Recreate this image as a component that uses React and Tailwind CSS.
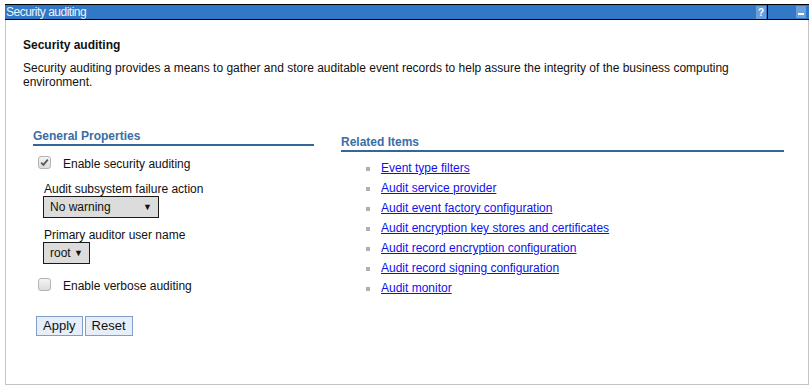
import React from "react";

function Check({ checked }) {
  return (
    <div className="w-[13px] h-[13px] rounded-[3px] border border-[#b4b4b4] bg-gradient-to-b from-[#f4f4f4] to-[#dcdcdc] flex items-center justify-center shrink-0">
      {checked && (
        <svg width="9" height="9" viewBox="0 0 9 9">
          <path d="M1.2 4.6 L3.4 6.8 L7.8 1.6" stroke="#5a5a5a" strokeWidth="1.8" fill="none" />
        </svg>
      )}
    </div>
  );
}

function Select({ value, width }) {
  return (
    <div className={`${width} h-[22px] border border-[#1a1a1a] bg-[#dcdcdc] flex items-center justify-between pl-[6px] pr-[6px]`}>
      <span>{value}</span>
      <span className="text-[9px] leading-none">▼</span>
    </div>
  );
}

const links = [
  "Event type filters",
  "Audit service provider",
  "Audit event factory configuration",
  "Audit encryption key stores and certificates",
  "Audit record encryption configuration",
  "Audit record signing configuration",
  "Audit monitor",
];

export default function App() {
  return (
    <div className="w-[812px] h-[389px] bg-white font-['Liberation_Sans',Arial,sans-serif] text-[12px] text-[#111] pt-[4px] pl-[5px]">
      <div className="w-[804px]">
        <div className="h-[16px] bg-[#3178c6] border-y border-black flex items-center">
          <span className="pl-[1px] text-[12px] leading-[14px] tracking-[-0.5px] text-[#eef3fb] flex-1">Security auditing</span>
          <div className="w-[10px] h-[13px] bg-[#6a9fd9] text-white text-[10px] font-bold leading-[13px] text-center">?</div>
          <div className="w-[1px] h-full bg-black ml-[1px]"></div>
          <div className="w-[28px]"></div>
          <div className="w-[10px] h-[12px] bg-[#6a9fd9] flex items-end justify-center pb-[3px]">
            <div className="w-[6px] h-[2px] bg-white"></div>
          </div>
          <div className="w-[3px]"></div>
        </div>
        <div className="h-[365px] border-x border-b border-[#c4c4c4] pl-[17px] pr-[16px] pt-[18px]">
          <div className="font-bold leading-[14px]">Security auditing</div>
          <div className="mt-[9px] leading-[14px] pr-[40px]">
            Security auditing provides a means to gather and store auditable event records to help assure the integrity of the business computing environment.
          </div>
          <div className="flex mt-[40px] pl-[10px] gap-[27px]">
            <div className="w-[281px]">
              <div className="font-bold text-[#3a6ea6] leading-[14px] pb-[1px] border-b-2 border-[#336699]">General Properties</div>
              <div className="flex items-center mt-[10px] pl-[5px] h-[13px]">
                <Check checked />
                <span className="ml-[12px] leading-[14px] mt-[2px]">Enable security auditing</span>
              </div>
              <div className="pl-[10px] mt-[13px]">
                <div className="leading-[14px] pl-[1px]">Audit subsystem failure action</div>
                <div><Select value="No warning" width="w-[116px]" /></div>
                <div className="leading-[14px] pl-[1px] mt-[10px]">Primary auditor user name</div>
                <div><Select value="root" width="w-[47px]" /></div>
              </div>
              <div className="flex items-center mt-[14px] pl-[5px] h-[13px]">
                <Check />
                <span className="ml-[12px] leading-[14px] mt-[3px]">Enable verbose auditing</span>
              </div>
              <div className="flex gap-[2px] mt-[25px] pl-[3px]">
                <button className="h-[20px] px-[6px] bg-[#e6eefa] border border-[#7f9fc6] leading-[16px] text-[13px] text-[#111]">Apply</button>
                <button className="h-[20px] px-[6px] bg-[#e6eefa] border border-[#7f9fc6] leading-[16px] text-[13px] text-[#111]">Reset</button>
              </div>
            </div>
            <div className="w-[443px] pt-[6px]">
              <div className="font-bold text-[#3a6ea6] leading-[14px] pb-[1px] border-b-2 border-[#336699]">Related Items</div>
              <ul className="mt-[6px] pl-[25px]">
                {links.map((l) => (
                  <li key={l} className="flex items-center h-[20px]">
                    <span className="w-[4px] h-[4px] bg-[#b0b0b0] mr-[11px] mt-[2px]"></span>
                    <a href="#" className="text-[#1010f0] underline leading-[14px]">{l}</a>
                  </li>
                ))}
              </ul>
            </div>
          </div>
        </div>
      </div>
    </div>
  );
}
